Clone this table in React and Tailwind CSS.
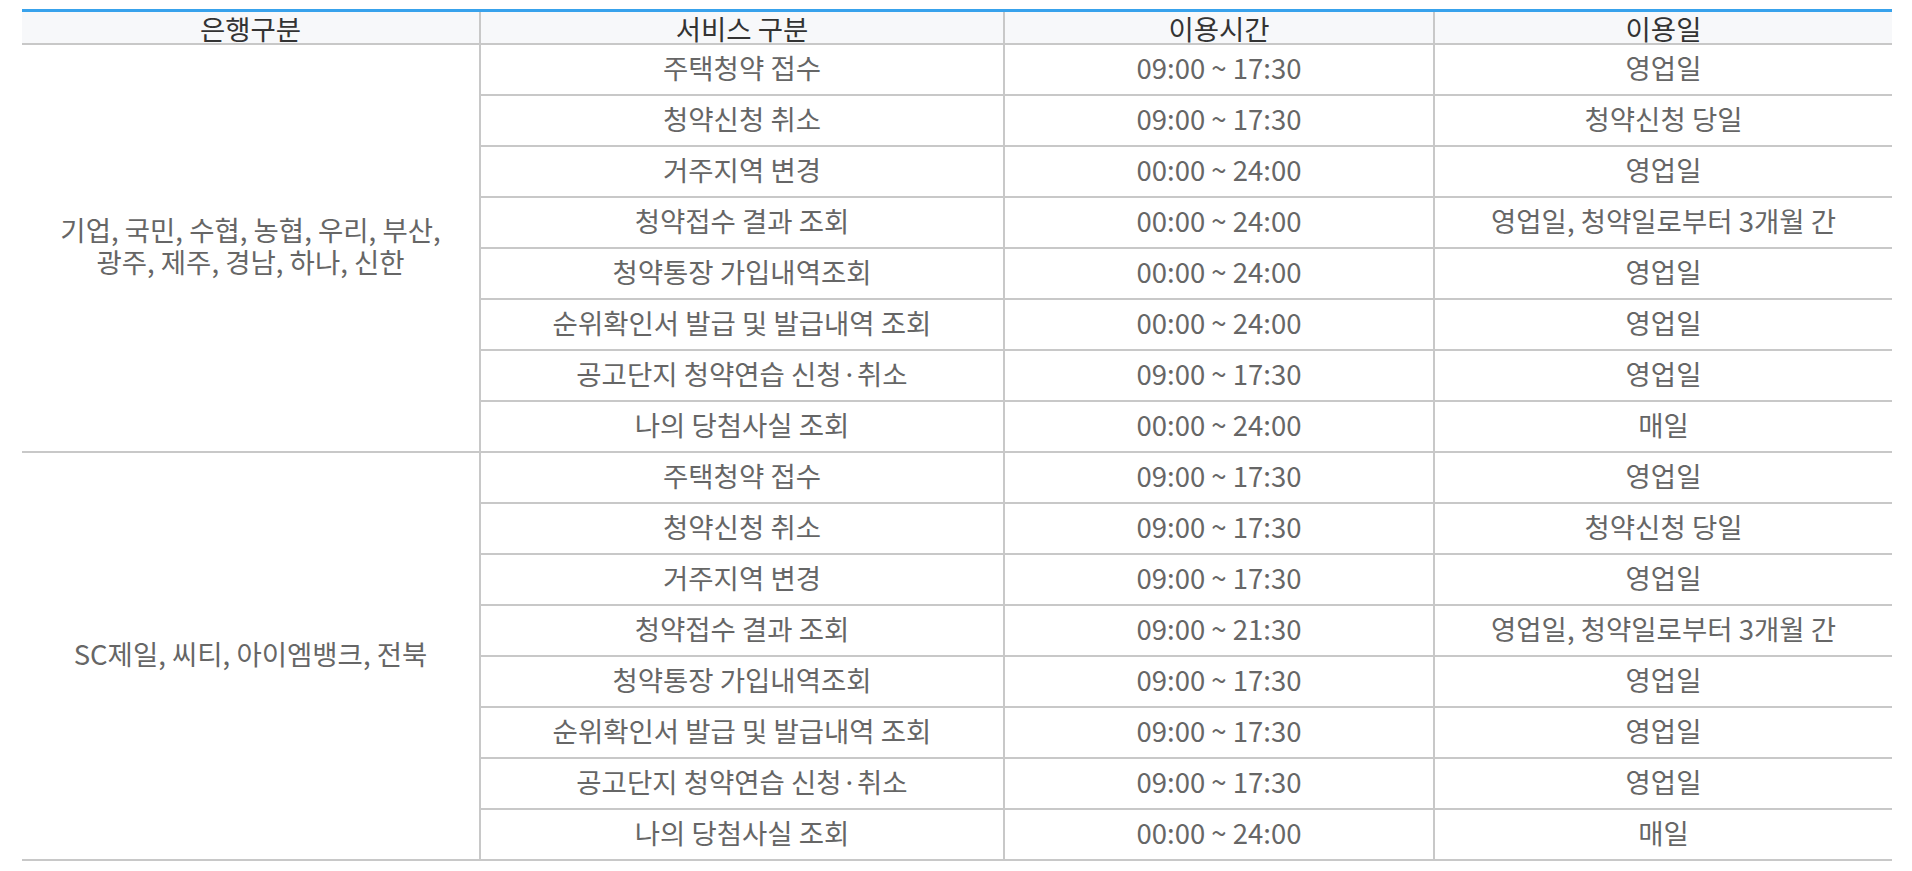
import React from "react";

const rowsA = [
  ["주택청약 접수", "09:00 ~ 17:30", "영업일"],
  ["청약신청 취소", "09:00 ~ 17:30", "청약신청 당일"],
  ["거주지역 변경", "00:00 ~ 24:00", "영업일"],
  ["청약접수 결과 조회", "00:00 ~ 24:00", "영업일, 청약일로부터 3개월 간"],
  ["청약통장 가입내역조회", "00:00 ~ 24:00", "영업일"],
  ["순위확인서 발급 및 발급내역 조회", "00:00 ~ 24:00", "영업일"],
  ["공고단지 청약연습 신청·취소", "09:00 ~ 17:30", "영업일"],
  ["나의 당첨사실 조회", "00:00 ~ 24:00", "매일"],
];

const rowsB = [
  ["주택청약 접수", "09:00 ~ 17:30", "영업일"],
  ["청약신청 취소", "09:00 ~ 17:30", "청약신청 당일"],
  ["거주지역 변경", "09:00 ~ 17:30", "영업일"],
  ["청약접수 결과 조회", "09:00 ~ 21:30", "영업일, 청약일로부터 3개월 간"],
  ["청약통장 가입내역조회", "09:00 ~ 17:30", "영업일"],
  ["순위확인서 발급 및 발급내역 조회", "09:00 ~ 17:30", "영업일"],
  ["공고단지 청약연습 신청·취소", "09:00 ~ 17:30", "영업일"],
  ["나의 당첨사실 조회", "00:00 ~ 24:00", "매일"],
];

function Cell({ children }) {
  return (
    <div className="bg-white flex items-center justify-center text-center text-[#666666] pb-[5px]">
      {children}
    </div>
  );
}

function Head({ children }) {
  return (
    <div className="bg-[#f7f8fa] flex items-center justify-center text-center text-[#333333]">
      {children}
    </div>
  );
}

export default function App() {
  return (
    <div
      className="bg-white w-[1912px] h-[871px] pt-[9px] pl-[22px]"
      style={{ fontFamily: '"Noto Sans CJK KR", "Noto Sans", sans-serif' }}
    >
      <div className="w-[1870px] border-t-[3px] border-t-[#38a2ec] border-b-2 border-b-[#c8c8c8] bg-[#c8c8c8] grid grid-cols-[457px_522px_428px_457px] grid-rows-[31px_repeat(16,49px)] gap-[2px] text-[27.5px] leading-[32px]">
        <Head>은행구분</Head>
        <Head>서비스 구분</Head>
        <Head>이용시간</Head>
        <Head>이용일</Head>
        <div className="bg-white col-start-1 row-span-8 flex flex-col items-center justify-center text-center text-[#666666] pb-[6px]">
          <span>기업, 국민, 수협, 농협, 우리, 부산,</span>
          <span>광주, 제주, 경남, 하나, 신한</span>
        </div>
        {rowsA.map((r, i) => (
          <React.Fragment key={"a" + i}>
            <Cell>{r[0]}</Cell>
            <Cell>{r[1]}</Cell>
            <Cell>{r[2]}</Cell>
          </React.Fragment>
        ))}
        <div className="bg-white col-start-1 row-span-8 flex items-center justify-center text-center text-[#666666] pb-[6px]">
          SC제일, 씨티, 아이엠뱅크, 전북
        </div>
        {rowsB.map((r, i) => (
          <React.Fragment key={"b" + i}>
            <Cell>{r[0]}</Cell>
            <Cell>{r[1]}</Cell>
            <Cell>{r[2]}</Cell>
          </React.Fragment>
        ))}
      </div>
    </div>
  );
}
